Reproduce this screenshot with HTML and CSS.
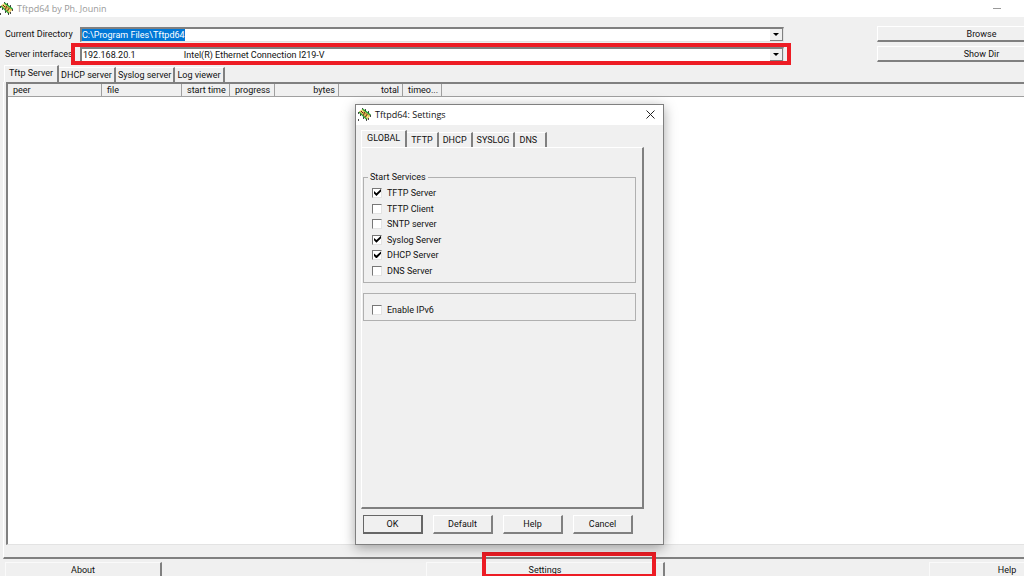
FILE: index.html
```
<!DOCTYPE html>
<html lang="en">
<head>
    <meta charset="UTF-8">
    <meta name="viewport" content="width=device-width, initial-scale=1.0">
    <title>Tftpd64 by Ph. Jounin</title>
    <link rel="stylesheet" href="styles.css">
</head>
<body>
    <!-- chip icon used by both title bars -->
    <svg class="defs" width="0" height="0">
        <symbol id="chip" viewBox="0 0 13 13">
            <path d="M1 3.5L4.5 1L12.5 7.5L9 11.5z" fill="#e8c55a"/>
            <path d="M4.5 1L12.5 7" stroke="#1fa32f" stroke-width="1.5"/>
            <path d="M1 4L9 11.5" stroke="#2aa436" stroke-width="1.2"/>
            <path d="M3 3l2 2M6.5 4l-1 3.5M8 5.5l1.5 1.5M7 8.5l2-1" stroke="#5a2412" stroke-width="1"/>
            <path d="M3.5 2.5l1.5 1M9 9.5l1-1.5" stroke="#fff3b0" stroke-width="1"/>
            <path d="M4 0h1M7 2h1M10 4h1M12 8h1M0 5h1M2 7h1M5 10h1M8 12h1M10 11h1M0 12h1" stroke="#111" stroke-width="1.4"/>
        </symbol>
    </svg>

    <div class="app">
        <header class="titlebar">
            <svg class="chip"><use href="#chip"/></svg>
            <h1>Tftpd64 by Ph. Jounin</h1>
            <button class="minimize" aria-label="Minimize"></button>
        </header>

        <div class="toolbar">
            <label for="directory">Current Directory</label>
            <div class="combo">
                <input type="text" id="directory" value="C:\Program Files\Tftpd64" spellcheck="false" autofocus>
                <button class="drop" aria-label="Recent directories"></button>
            </div>
            <button class="btn">Browse</button>

            <label for="interfaces">Server interfaces</label>
            <div class="combo marked">
                <select id="interfaces">
                    <option>192.168.20.1&emsp;&emsp;&emsp;&emsp;&emsp;&nbsp;Intel(R) Ethernet Connection I219-V</option>
                </select>
                <span class="drop"></span>
            </div>
            <button class="btn">Show Dir</button>
        </div>

        <nav class="tabs">
            <button class="tab active">Tftp Server</button>
            <button class="tab">DHCP server</button>
            <button class="tab">Syslog server</button>
            <button class="tab">Log viewer</button>
        </nav>

        <main class="panel">
            <div class="list">
                <table>
                    <colgroup>
                        <col class="col-peer">
                        <col class="col-file">
                        <col class="col-start">
                        <col class="col-progress">
                        <col class="col-bytes">
                        <col class="col-total">
                        <col class="col-timeout">
                        <col>
                    </colgroup>
                    <thead>
                        <tr>
                            <th>peer</th>
                            <th>file</th>
                            <th>start time</th>
                            <th>progress</th>
                            <th class="num">bytes</th>
                            <th class="num">total</th>
                            <th>timeo...</th>
                            <th></th>
                        </tr>
                    </thead>
                </table>
            </div>
        </main>

        <footer class="bottom">
            <button class="btn">About</button>
            <div class="marked-settings">
                <button class="btn">Settings</button>
            </div>
            <button class="btn">Help</button>
        </footer>
    </div>

    <div class="dialog" role="dialog" aria-labelledby="dialog-title">
        <div class="dialog-title">
            <svg class="chip"><use href="#chip"/></svg>
            <h2 id="dialog-title">Tftpd64: Settings</h2>
            <button class="close" aria-label="Close">
                <svg width="9" height="9" viewBox="0 0 9 9"><path d="M0.5 0.5l8 8M8.5 0.5l-8 8" stroke="#222" fill="none"/></svg>
            </button>
        </div>

        <div class="dialog-body">
            <nav class="tabs dialog-tabs">
                <button class="tab active">GLOBAL</button>
                <button class="tab">TFTP</button>
                <button class="tab">DHCP</button>
                <button class="tab">SYSLOG</button>
                <button class="tab last">DNS</button>
            </nav>

            <div class="page">
                <fieldset class="services">
                    <legend>Start Services</legend>
                    <label><input type="checkbox" checked>TFTP Server</label>
                    <label><input type="checkbox">TFTP Client</label>
                    <label><input type="checkbox">SNTP server</label>
                    <label><input type="checkbox" checked>Syslog Server</label>
                    <label><input type="checkbox" checked>DHCP Server</label>
                    <label><input type="checkbox">DNS Server</label>
                </fieldset>
                <fieldset class="ipv6">
                    <label><input type="checkbox">Enable IPv6</label>
                </fieldset>
            </div>

            <div class="actions">
                <button class="btn default">OK</button>
                <button class="btn">Default</button>
                <button class="btn">Help</button>
                <button class="btn">Cancel</button>
            </div>
        </div>
    </div>

    <script src="app.js"></script>
</body>
</html>
```

FILE: styles.css
```
* {
    box-sizing: border-box;
}

body {
    margin: 0;
    height: 100vh;
    overflow: hidden;
    position: relative;
    background: #f0f0f0;
    color: #111;
    font-family: Roboto, "Liberation Sans", sans-serif;
    font-size: 9px;
    line-height: 12px;
}

button,
input,
select {
    font: inherit;
    color: inherit;
    margin: 0;
    padding: 0;
    border: 0;
    border-radius: 0;
    outline: none;
}

.defs {
    position: absolute;
}

.chip {
    width: 13px;
    height: 13px;
}

/* the window runs past the right and bottom edge of the screen */
.app {
    width: calc(100% + 67px);
    height: calc(100vh + 2px);
    display: flex;
    flex-direction: column;
}

.titlebar {
    display: flex;
    align-items: center;
    flex: none;
    height: 17px;
    gap: 4px;
    background: #fff;
}

.titlebar h1,
.dialog-title h2 {
    flex: 1;
    margin: 0;
    font-family: "Open Sans", "Noto Sans", sans-serif;
    font-size: 9px;
    font-weight: normal;
}

.titlebar h1 {
    color: #999;
}

.minimize {
    width: 8px;
    height: 1px;
    margin-right: 90px;
    background: #999;
}

.toolbar {
    display: grid;
    grid-template-columns: 74px 1fr 303px;
    grid-auto-rows: 16px;
    row-gap: 4px;
    align-items: center;
    padding: 9px 4px 3px 6px;
}

.toolbar label {
    padding-bottom: 1px;
    margin-left: -1px;
}

.toolbar .btn {
    margin-left: 93px;
    height: 16px;
}

.btn {
    background: #f0f0f0;
    border: 1px solid #fff;
    border-right: 2px solid #808080;
    border-bottom: 2px solid #808080;
    text-align: center;
}

.combo {
    display: flex;
    position: relative;
    height: 15px;
    background: #fff;
    border: 1px solid #e3e3e3;
    border-top: 2px solid #808080;
    border-left: 2px solid #808080;
}

.combo input,
.combo select {
    flex: 1;
    min-width: 0;
    height: 12px;
    line-height: 12px;
    background: #fff;
    appearance: none;
}

.combo input::selection {
    background: #0078d7;
    color: #fff;
}

.combo select {
    padding-left: 1px;
}

.drop {
    display: flex;
    align-items: center;
    justify-content: center;
    width: 13px;
    height: 12px;
    background: #f0f0f0;
    border-right: 1px solid #808080;
    border-bottom: 1px solid #808080;
    pointer-events: none;
}

.drop::before {
    content: "";
    border: 3px solid transparent;
    border-top-color: #000;
    border-bottom: 0;
}

/* red highlight frames */
.marked::after {
    content: "";
    position: absolute;
    inset: -6px -8px -4px -11px;
    border: 4px solid #ed1c24;
}

.marked-settings {
    position: relative;
}

.marked-settings::after {
    content: "";
    position: absolute;
    inset: -10px 9px 1px 56px;
    border: 4px solid #ed1c24;
    border-bottom-width: 3px;
}

.tabs {
    display: flex;
    align-items: flex-end;
    flex: none;
    height: 17px;
    padding-left: 4px;
}

.tab {
    height: 15px;
    padding: 0 2px;
    background: #f0f0f0;
    border-top: 1px solid #fff;
    border-right: 2px solid #808080;
}

.tab.active {
    height: 17px;
    padding: 0 4px 3px;
    border-left: 1px solid #fff;
}

.panel {
    flex: 1;
    display: flex;
    margin: 0 2px 0 3px;
    padding: 0 3px 12px 2px;
    border-bottom: 2px solid #808080;
    border-left: 1px solid #fff;
}

.list {
    flex: 1;
    background: #fff;
    border-top: 2px solid #808080;
    border-left: 2px solid #808080;
    border-bottom: 1px solid #e3e3e3;
}

table {
    width: 100%;
    table-layout: fixed;
    border-collapse: separate;
    border-spacing: 0;
}

th {
    height: 13px;
    padding: 0 5px;
    background: #f0f0f0;
    border-right: 1px solid #a0a0a0;
    border-bottom: 1px solid #a0a0a0;
    font-weight: normal;
    line-height: 12px;
    text-align: left;
    white-space: nowrap;
}

.num {
    padding: 0 3px;
    text-align: right;
}

.col-peer {
    width: 94px;
}

.col-file {
    width: 80px;
}

.col-start {
    width: 48px;
}

.col-progress {
    width: 45px;
}

.col-bytes,
.col-total {
    width: 64px;
}

.col-timeout {
    width: 39px;
}

.bottom {
    display: grid;
    grid-template-columns: 157px 239px 157px;
    justify-content: space-between;
    flex: none;
    padding: 3px 5px 0;
}

.bottom .btn {
    width: 100%;
    height: 16px;
    display: block;
    border-color: #fafafa #808080 #808080 #fafafa;
}

/* settings dialog */
.dialog {
    position: absolute;
    top: 104px;
    left: 355px;
    width: 309px;
    background: #f0f0f0;
    border: 1px solid #808080;
    box-shadow: 0 3px 12px rgba(0, 0, 0, 0.35);
}

.dialog-title {
    display: flex;
    align-items: center;
    height: 20px;
    gap: 4px;
    padding: 0 8px 1px 2px;
    background: #fff;
}

.close {
    display: flex;
    padding: 0;
    background: none;
}

.dialog-body {
    padding: 5px 19px 10px 5px;
}

.dialog-tabs {
    padding-left: 0;
}

.dialog-tabs .tab {
    padding: 0 4px;
}

.dialog-tabs .active {
    padding: 0 5px 3px;
}

.dialog-tabs .last {
    padding-right: 8px;
}

.page {
    height: 362px;
    padding: 23px 6px 0 1px;
    border: 1px solid #fff;
    border-right: 2px solid #808080;
    border-bottom: 2px solid #808080;
}

fieldset {
    display: flex;
    flex-direction: column;
    margin: 0;
    border: 1px solid #b0b0b0;
}

legend {
    padding: 0 2px;
}

.services {
    height: 112px;
    padding: 4px 9px 5px 4px;
    justify-content: space-between;
}

.services label,
.ipv6 label {
    padding-left: 4px;
}

.ipv6 {
    height: 28px;
    margin-top: 10px;
    padding: 10px 4px 0;
}

fieldset label {
    display: flex;
    align-items: center;
    gap: 5px;
}

input[type="checkbox"] {
    appearance: none;
    width: 10px;
    height: 10px;
    background: #fff;
    border: 1px solid #e3e3e3;
    border-top: 1px solid #777;
    border-left: 1px solid #777;
}

input[type="checkbox"]:checked::before {
    content: "";
    display: block;
    width: 7px;
    height: 7px;
    margin: 0 0 0 1px;
    background: #000;
    clip-path: polygon(0 30%, 35% 60%, 100% 0, 100% 35%, 35% 100%, 0 65%);
}

.actions {
    display: flex;
    gap: 10px;
    padding: 6px 0 0 2px;
}

.actions .btn {
    width: 60px;
    height: 19px;
}

.actions .default {
    border: 1px solid #666;
    border-right: 2px solid #666;
    border-bottom: 2px solid #666;
}
```

FILE: app.js
```
const directory = document.getElementById("directory");
directory.focus();
directory.select();
```
